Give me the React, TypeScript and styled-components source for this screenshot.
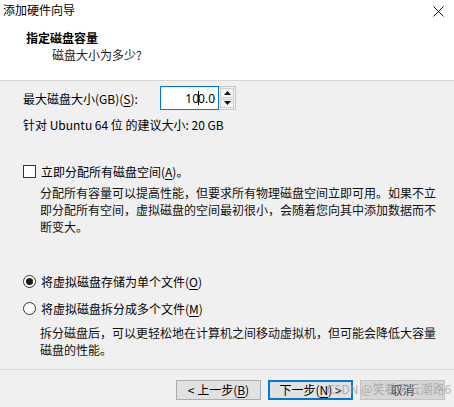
import React from 'react';
import styled, { createGlobalStyle } from 'styled-components';

const GlobalStyle = createGlobalStyle`
  html, body {
    margin: 0;
    padding: 0;
    background: #f0f0f0;
  }
  body {
    font-family: "Noto Sans CJK SC", "Noto Sans", sans-serif;
    font-size: 12px;
    color: #000;
  }
`;

const Window = styled.div`
  position: relative;
  width: 454px;
  height: 407px;
  display: flex;
  flex-direction: column;
  background: #f0f0f0;
  overflow: hidden;
`;

const TitleBar = styled.div`
  height: 22px;
  flex-shrink: 0;
  display: flex;
  align-items: center;
  justify-content: space-between;
  padding: 0 10px 0 3px;
  background: #fff;
`;

const Title = styled.span`
  font-size: 12px;
  line-height: 16px;
  margin-top: -2px;
`;

const Header = styled.div`
  height: 59px;
  flex-shrink: 0;
  background: #fff;
  border-bottom: 1px solid #d7d7d7;
  padding: 7px 0 0 26px;
  box-sizing: border-box;
`;

const HeaderTitle = styled.div`
  font-weight: bold;
  font-size: 12px;
  line-height: 17px;
`;

const HeaderSub = styled.div`
  margin-left: 26px;
  line-height: 17px;
  color: #222;
`;

const Body = styled.div`
  flex: 1;
  min-height: 0;
  padding: 5px 0 0 23px;
`;

const Row = styled.div`
  display: flex;
  align-items: center;
  gap: 5px;
`;

const Label = styled.span`
  line-height: 17px;
  width: 132px;
`;

const SpinBox = styled.div`
  display: flex;
  height: 24px;
`;

const NumberField = styled.div`
  width: 54px;
  height: 22px;
  border: 1px solid #0078d7;
  background: #fff;
  display: flex;
  align-items: center;
  justify-content: flex-end;
  padding-right: 3px;
  font-family: "Noto Sans", sans-serif;
  font-size: 12px;
`;

const Caret = styled.span`
  display: inline-block;
  width: 1px;
  height: 14px;
  background: #000;
  margin: 0 -1px;
`;

const SpinButtons = styled.div`
  width: 17px;
  display: flex;
  flex-direction: column;
  border: 1px solid #c8c8c8;
  border-left: none;
  box-sizing: border-box;
  background: #f0f0f0;
  gap: 1px;
  padding: 1px;
`;

const SpinButton = styled.div`
  flex: 1;
  background: #f3f3f3;
  border: 1px solid #d0d0d0;
  display: flex;
  align-items: center;
  justify-content: center;
`;

const Hint = styled.div`
  margin-top: 6px;
  line-height: 17px;
`;

const OptionRow = styled.label<{ $top: number }>`
  display: flex;
  align-items: center;
  gap: 5px;
  margin-top: ${({ $top }) => $top}px;
  line-height: 17px;
`;

const CheckBox = styled.span`
  width: 11px;
  height: 11px;
  border: 1px solid #333;
  background: #fff;
  flex-shrink: 0;
`;

const Radio = styled.span<{ $checked?: boolean }>`
  width: 11px;
  height: 11px;
  border: 1px solid #333;
  border-radius: 50%;
  background: #fff;
  flex-shrink: 0;
  display: flex;
  align-items: center;
  justify-content: center;
  &::after {
    content: '';
    width: 7px;
    height: 7px;
    border-radius: 50%;
    background: ${({ $checked }) => ($checked ? '#1a1a1a' : 'transparent')};
  }
`;

const Note = styled.p<{ $top: number }>`
  margin: ${({ $top }) => $top}px 0 0 17px;
  width: 396px;
  line-height: 17px;
  color: #111;
`;

const Underline = styled.u`
  text-underline-offset: 2px;
`;

const Footer = styled.div`
  height: 38px;
  flex-shrink: 0;
  border-top: 1px solid #d7d7d7;
  display: flex;
  justify-content: flex-end;
  align-items: flex-start;
  gap: 7px;
  padding: 10px 9px 0 0;
  box-sizing: border-box;
`;

const Button = styled.div<{ $primary?: boolean; $disabled?: boolean }>`
  width: 85px;
  height: 20px;
  box-sizing: border-box;
  display: flex;
  align-items: center;
  justify-content: center;
  background: ${({ $disabled }) => ($disabled ? '#d6d6d6' : '#e1e1e1')};
  border: 1px solid
    ${({ $primary, $disabled }) => ($primary ? '#0078d7' : $disabled ? '#c4c4c4' : '#adadad')};
  box-shadow: ${({ $primary }) => ($primary ? 'inset 0 0 0 1px #0078d7' : 'none')};
  color: ${({ $disabled }) => ($disabled ? '#444' : '#000')};
  line-height: 16px;
`;

const Watermark = styled.div`
  position: absolute;
  left: 327px;
  top: 381px;
  font-size: 12px;
  line-height: 16px;
  color: rgba(150, 150, 150, 0.7);
  white-space: nowrap;
  pointer-events: none;
`;

const CloseIcon = () => (
  <svg width="11" height="11" viewBox="0 0 11 11">
    <path d="M0.5 0.5 L10.5 10.5 M10.5 0.5 L0.5 10.5" stroke="#111" strokeWidth="1" />
  </svg>
);

const Arrow = ({ up }: { up?: boolean }) => (
  <svg width="7" height="4" viewBox="0 0 7 4">
    <path d={up ? 'M0 4 L3.5 0 L7 4 Z' : 'M0 0 L3.5 4 L7 0 Z'} fill="#111" />
  </svg>
);

const App: React.FC = () => {
  return (
    <>
      <GlobalStyle />
      <Window>
        <TitleBar>
          <Title>添加硬件向导</Title>
          <CloseIcon />
        </TitleBar>
        <Header>
          <HeaderTitle>指定磁盘容量</HeaderTitle>
          <HeaderSub>磁盘大小为多少?</HeaderSub>
        </Header>
        <Body>
          <Row>
            <Label>
              最大磁盘大小(GB)(<Underline>S</Underline>):
            </Label>
            <SpinBox>
              <NumberField>
                10
                <Caret />
                0.0
              </NumberField>
              <SpinButtons>
                <SpinButton>
                  <Arrow up />
                </SpinButton>
                <SpinButton>
                  <Arrow />
                </SpinButton>
              </SpinButtons>
            </SpinBox>
          </Row>
          <Hint>针对 Ubuntu 64 位 的建议大小: 20 GB</Hint>
          <OptionRow $top={30}>
            <CheckBox />
            <span>
              立即分配所有磁盘空间(<Underline>A</Underline>)。
            </span>
          </OptionRow>
          <Note $top={4}>
            分配所有容量可以提高性能，但要求所有物理磁盘空间立即可用。如果不立即分配所有空间，虚拟磁盘的空间最初很小，会随着您向其中添加数据而不断变大。
          </Note>
          <OptionRow $top={38}>
            <Radio $checked />
            <span>
              将虚拟磁盘存储为单个文件(<Underline>O</Underline>)
            </span>
          </OptionRow>
          <OptionRow $top={10}>
            <Radio />
            <span>
              将虚拟磁盘拆分成多个文件(<Underline>M</Underline>)
            </span>
          </OptionRow>
          <Note $top={7}>
            拆分磁盘后，可以更轻松地在计算机之间移动虚拟机，但可能会降低大容量磁盘的性能。
          </Note>
        </Body>
        <Footer>
          <Button>
            &lt; 上一步(<Underline>B</Underline>)
          </Button>
          <Button $primary>
            下一步(<Underline>N</Underline>) &gt;
          </Button>
          <Button $disabled>取消</Button>
        </Footer>
        <Watermark>CSDN @笑看风云潮路6</Watermark>
      </Window>
    </>
  );
};

export default App;
